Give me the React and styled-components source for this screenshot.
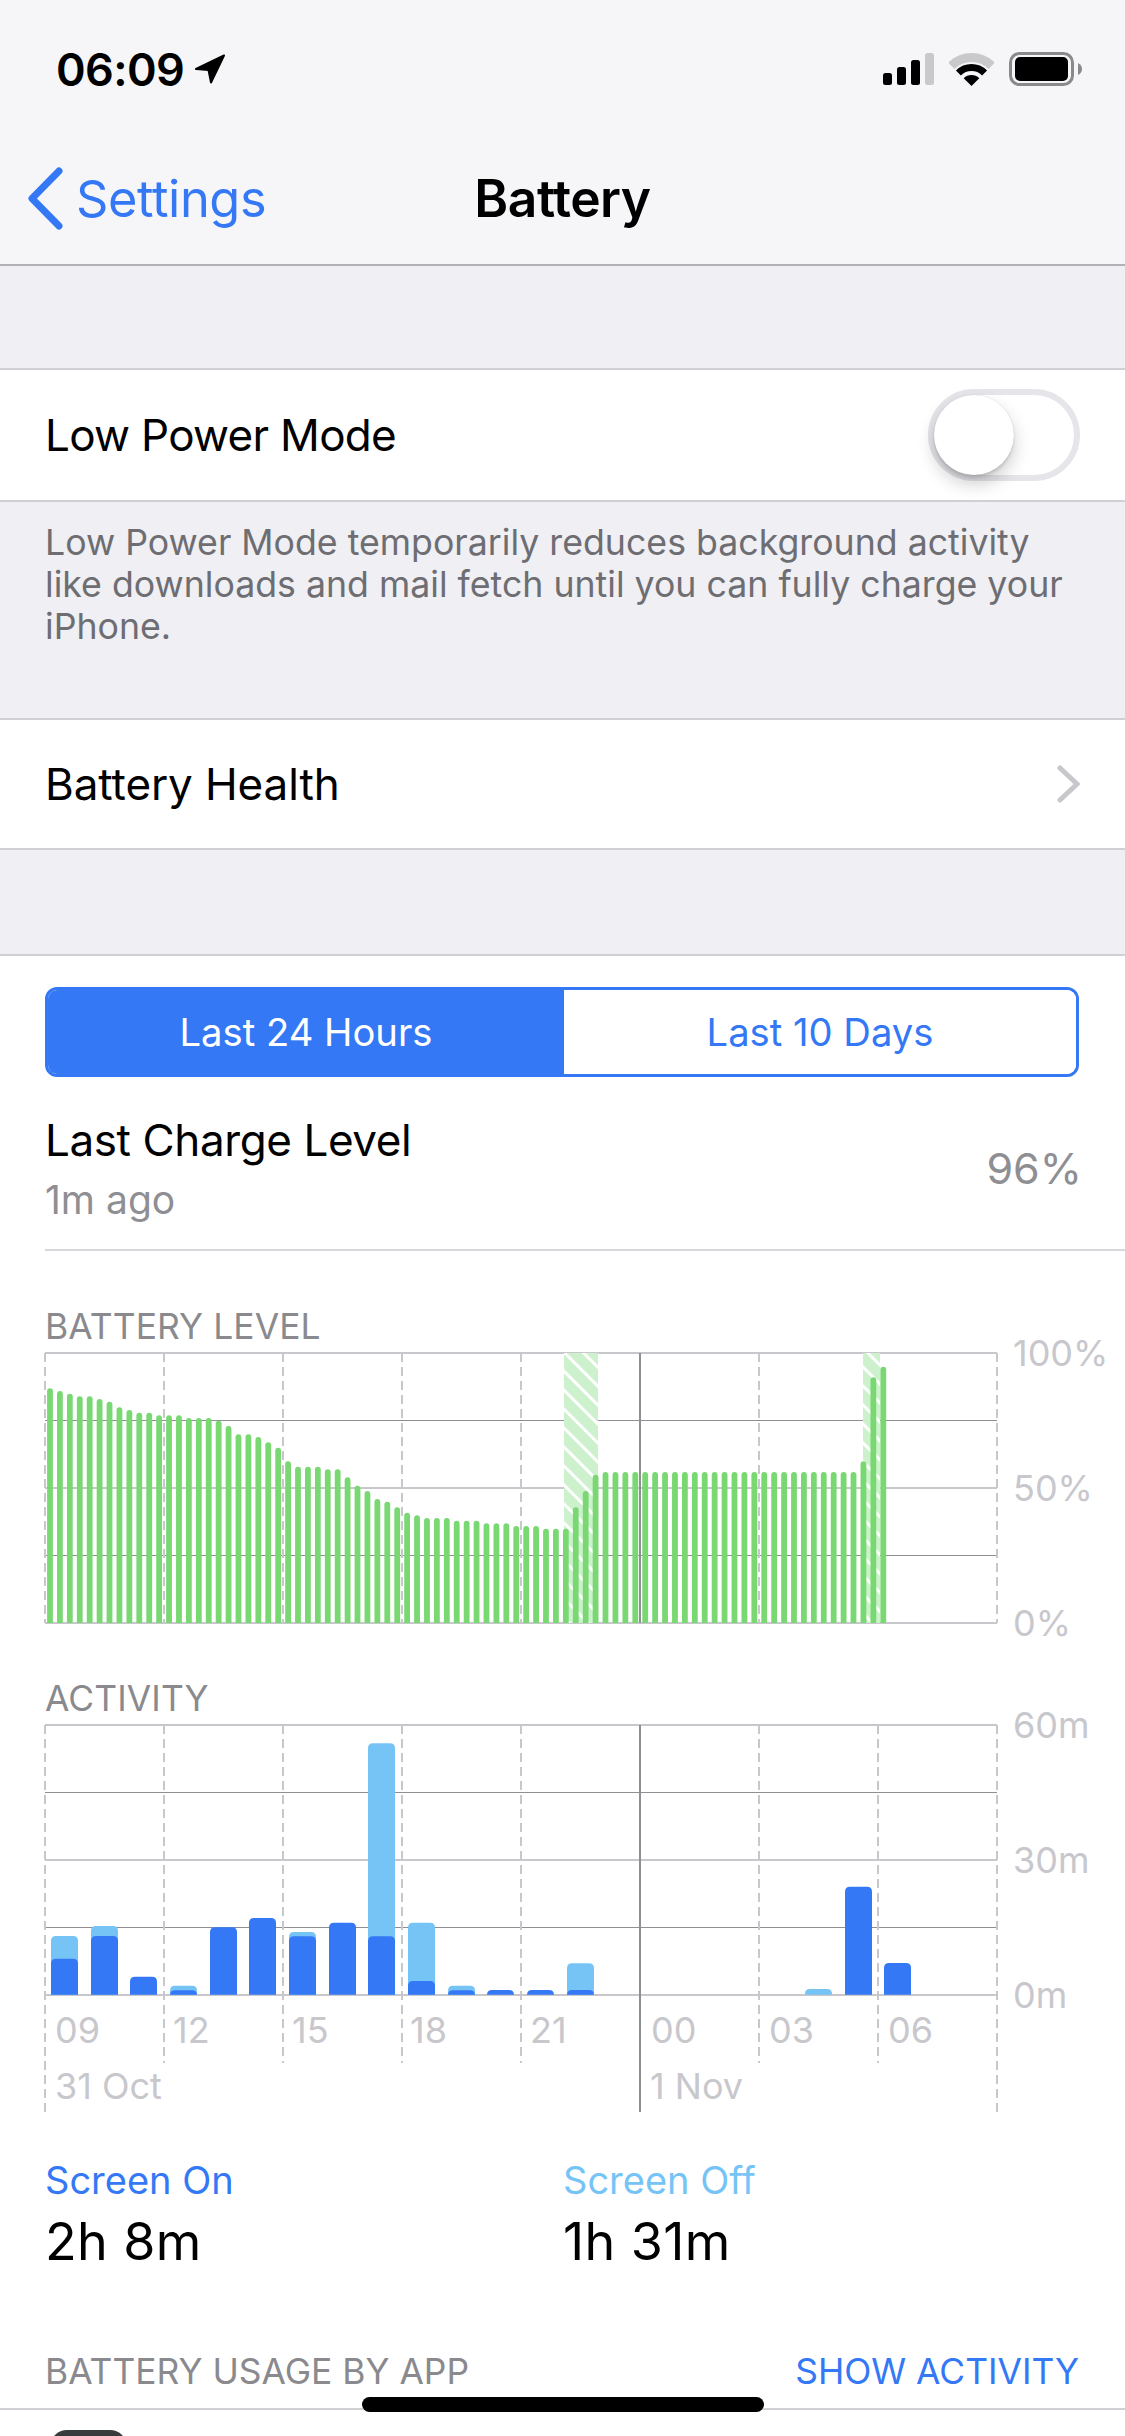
import React from 'react';
import styled, { createGlobalStyle } from 'styled-components';

const BLUE = '#3478f6';
const SKY = '#76c4f6';
const GREEN = '#79d872';
const HATCH = '#cdf1cd';
const LINE = '#c7c7cc';
const DARKLINE = '#8e8e93';

const GlobalStyle = createGlobalStyle`
  html, body {
    margin: 0;
    background: #efeff4;
    font-family: Inter, "Liberation Sans", sans-serif;
  }
`;

const Screen = styled.div`
  position: relative;
  width: 1125px;
  height: 2436px;
  overflow: hidden;
  display: flex;
  flex-direction: column;
`;

const Header = styled.header`
  height: 264px;
  flex: none;
  background: #f6f6f8;
  border-bottom: 2px solid #b2b2b4;
`;

const StatusBar = styled.div`
  height: 138px;
  box-sizing: border-box;
  padding: 0 43px 0 56px;
  display: flex;
  align-items: center;
  justify-content: space-between;
`;

const Clock = styled.div`
  display: flex;
  align-items: center;
  gap: 10px;
  font-size: 45px;
  font-weight: 600;
  letter-spacing: -0.6px;
  color: #000;
`;

const StatusIcons = styled.div`
  display: flex;
  align-items: center;
  gap: 15px;
`;

const NavBar = styled.nav`
  height: 120px;
  display: grid;
  grid-template-columns: 1fr auto 1fr;
  align-items: center;
`;

const BackLink = styled.div`
  display: flex;
  align-items: center;
  gap: 13px;
  padding-left: 27px;
  font-size: 50.5px;
  letter-spacing: -0.4px;
  color: ${BLUE};
`;

const NavTitle = styled.div`
  font-size: 51.5px;
  font-weight: 600;
  letter-spacing: -0.5px;
  color: #000;
`;

const Gap = styled.div`
  flex: none;
  height: ${(p) => p.$h}px;
`;

const Row = styled.div`
  flex: none;
  height: ${(p) => p.$h || 132}px;
  box-sizing: border-box;
  padding: 0 46px 0 45px;
  display: flex;
  align-items: center;
  justify-content: space-between;
  background: #fff;
  border-top: 2px solid #d0d0d4;
  border-bottom: 2px solid #d0d0d4;
`;

const RowLabel = styled.div`
  font-size: 44px;
  letter-spacing: ${(p) => (p.$tight ? -0.7 : -0.1)}px;
  color: #000;
`;

const Toggle = styled.div`
  position: relative;
  width: 152px;
  height: 92px;
  box-sizing: border-box;
  margin-right: -1px;
  border: 6px solid #e5e5ea;
  border-radius: 46px;
`;

const Knob = styled.div`
  position: absolute;
  left: 0;
  top: 0;
  width: 80px;
  height: 80px;
  border-radius: 50%;
  background: #fff;
  box-shadow: 0 9px 18px rgba(0, 0, 0, 0.2), 0 3px 3px rgba(0, 0, 0, 0.1), 0 0 1px rgba(0, 0, 0, 0.2);
`;

const RowChevron = styled.svg`
  margin-right: -2px;
`;

const FooterNote = styled.p`
  flex: none;
  height: 216px;
  box-sizing: border-box;
  margin: 0;
  padding: 19px 40px 0 45px;
  font-size: 35.7px;
  line-height: 42px;
  color: #6d6d72;
`;

const Panel = styled.section`
  flex: 1;
  background: #fff;
  border-top: 2px solid #d0d0d4;
  display: flex;
  flex-direction: column;
`;

const Segmented = styled.div`
  margin: 31px 46px 0 45px;
  height: 90px;
  box-sizing: border-box;
  display: grid;
  grid-template-columns: 516px 1fr;
  border: 3px solid ${BLUE};
  border-radius: 12px;
  overflow: hidden;
`;

const Segment = styled.div`
  display: flex;
  align-items: center;
  justify-content: center;
  font-size: 38.2px;
  background: ${(p) => (p.$active ? BLUE : '#fff')};
  color: ${(p) => (p.$active ? '#fff' : BLUE)};
`;

const ChargeRow = styled.div`
  margin-left: 45px;
  padding-right: 43px;
  height: 174px;
  box-sizing: border-box;
  display: flex;
  align-items: center;
  justify-content: space-between;
  border-bottom: 2px solid #d8d8dc;
`;

const ChargeText = styled.div`
  align-self: flex-start;
  padding-top: 36px;
`;

const ChargeTitle = styled.div`
  font-size: 44px;
  letter-spacing: -0.4px;
  line-height: 54px;
  color: #000;
`;

const ChargeAge = styled.div`
  font-size: 39px;
  line-height: 44px;
  color: #8e8e93;
  margin-top: 11px;
`;

const ChargeValue = styled.div`
  font-size: 43px;
  color: #8e8e93;
  margin-top: 9px;
`;

const ChartTitle = styled.div`
  margin: ${(p) => p.$top}px 0 0 45px;
  height: 29px;
  font-size: 35.4px;
  line-height: 32px;
  letter-spacing: 0.1px;
  color: #8a8a8e;
`;

const ChartSvg = styled.svg`
  display: block;
  flex: none;
  overflow: visible;
`;

const AxisText = styled.text`
  font-family: Inter, "Liberation Sans", sans-serif;
  font-size: 36px;
  fill: ${LINE};
`;

const Legend = styled.div`
  display: grid;
  grid-template-columns: 518px 1fr;
  padding-left: 45px;
  margin-top: 44px;
`;

const LegendLabel = styled.div`
  font-size: 38px;
  line-height: 48px;
  color: ${(p) => p.$color};
`;

const LegendValue = styled.div`
  font-size: 52px;
  line-height: 60px;
  margin-top: 8px;
  letter-spacing: 0.4px;
  color: #000;
`;

const UsageHeader = styled.div`
  margin-top: 76px;
  padding: 0 46px 0 45px;
  height: 46px;
  display: flex;
  align-items: center;
  justify-content: space-between;
  font-size: 35.4px;
  color: #8a8a8e;
`;

const ShowActivity = styled.span`
  color: ${BLUE};
`;

const UsageRule = styled.div`
  margin-top: 14px;
  height: 2px;
  background: #d0d0d4;
`;

const AppIcon = styled.div`
  margin: 20px 0 0 50px;
  width: 77px;
  height: 77px;
  border-radius: 17px;
  background: linear-gradient(#3a3d3d, #222);
`;

const HomeIndicator = styled.div`
  position: absolute;
  left: 362px;
  top: 2397px;
  width: 402px;
  height: 15px;
  border-radius: 8px;
  background: #000;
`;

const levelTops = [
  295, 303, 311, 319, 319, 327, 335, 352, 360, 368, 368, 376, 376, 376, 384, 384, 384, 392, 408, 433,
  433, 441, 457, 473, 514, 530, 530, 530, 538, 538, 562, 587, 603, 627, 635, 652, 668, 676, 684, 684,
  684, 692, 692, 692, 700, 700, 700, 708, 708, 708, 716, 716, 716, 652, 603, 554,
  ...Array(26).fill(546), 514, 262, 230,
];

const activity = [
  { x: 51, sky: 798, blue: 866 },
  { x: 91, sky: 768, blue: 798 },
  { x: 130, blue: 920 },
  { x: 170, sky: 947, blue: 961 },
  { x: 210, blue: 772 },
  { x: 249, blue: 744 },
  { x: 289, sky: 786, blue: 799 },
  { x: 329, blue: 758 },
  { x: 368, sky: 220, blue: 799 },
  { x: 408, sky: 758, blue: 933 },
  { x: 448, sky: 947, blue: 961 },
  { x: 487, blue: 960 },
  { x: 527, blue: 960 },
  { x: 567, sky: 880, blue: 960 },
  { x: 805, sky: 957 },
  { x: 845, blue: 650 },
  { x: 884, blue: 879 },
];

const columns = [45, 164, 283, 402, 521, 640, 759, 878, 997];

const roundTop = (x, top, w, bottom, r) =>
  `M${x} ${bottom}V${top + r}Q${x} ${top} ${x + r} ${top}H${x + w - r}Q${x + w} ${top} ${x + w} ${top + r}V${bottom}Z`;

function Grid({ top, step, dropInner, dropEdge }) {
  const bottom = top + step * 4;
  return (
    <>
      {[0, 1, 2, 3, 4].map((i) => {
        const heavy = i % 2 === 0;
        return (
          <line
            key={i}
            x1={45}
            x2={997}
            y1={top + step * i}
            y2={top + step * i}
            stroke={heavy ? LINE : DARKLINE}
            strokeWidth={heavy ? 2 : 1.2}
          />
        );
      })}
      {columns.map((x, i) => {
        const edge = i === 0 || i === 8;
        if (i === 5) {
          return <line key={x} x1={x} x2={x} y1={top} y2={bottom + dropEdge} stroke={DARKLINE} strokeWidth={2} />;
        }
        return (
          <line
            key={x}
            x1={x}
            x2={x}
            y1={top}
            y2={bottom + (edge ? dropEdge : dropInner)}
            stroke={LINE}
            strokeWidth={2}
            strokeDasharray="9 5"
          />
        );
      })}
    </>
  );
}

function BatteryChart() {
  const y = (z) => 1290 + z / 3 - 1340;
  return (
    <ChartSvg width={1125} height={300} viewBox="0 0 1125 300">
      <defs>
        <pattern id="charging" width="13.4" height="13.4" patternUnits="userSpaceOnUse" patternTransform="rotate(-45)">
          <rect width="13.4" height="13.4" fill={HATCH} />
          <rect width="3" height="13.4" fill="#fff" />
        </pattern>
      </defs>
      <Grid top={13} step={67.5} dropInner={0} dropEdge={0} />
      <rect x={564} y={13} width={34} height={270} fill="url(#charging)" />
      <rect x={863} y={13} width={17} height={270} fill="url(#charging)" />
      {levelTops.map((z, i) => (
        <path key={i} d={roundTop(47.1 + i * 9.92, y(z), 5.8, 283, 2.9)} fill={GREEN} />
      ))}
      <AxisText x={1013} y={26}>100%</AxisText>
      <AxisText x={1013} y={161}>50%</AxisText>
      <AxisText x={1013} y={296}>0%</AxisText>
    </ChartSvg>
  );
}

function ActivityChart() {
  const y = (z) => 1670 + z / 3 - 1712;
  const base = y(974);
  return (
    <ChartSvg width={1125} height={400} viewBox="0 0 1125 400">
      <Grid top={13} step={67.5} dropInner={68} dropEdge={117} />
      {activity.map((b) => (
        <g key={b.x}>
          {b.sky && <path d={roundTop(b.x, y(b.sky), 27, base, 5)} fill={SKY} />}
          {b.blue && <path d={roundTop(b.x, y(b.blue), 27, base, 5)} fill={BLUE} />}
        </g>
      ))}
      <AxisText x={1013} y={26}>60m</AxisText>
      <AxisText x={1013} y={161}>30m</AxisText>
      <AxisText x={1013} y={296}>0m</AxisText>
      {[
        ['09', 55],
        ['12', 173],
        ['15', 292],
        ['18', 410],
        ['21', 530],
        ['00', 651],
        ['03', 769],
        ['06', 888],
      ].map(([label, x]) => (
        <AxisText key={label} x={x} y={331}>{label}</AxisText>
      ))}
      <AxisText x={55} y={387}>31 Oct</AxisText>
      <AxisText x={650} y={387}>1 Nov</AxisText>
    </ChartSvg>
  );
}

export default function App() {
  return (
    <Screen>
      <GlobalStyle />
      <Header>
        <StatusBar>
          <Clock>
            06:09
            <svg width="32" height="30" viewBox="0 0 32 30">
              <path d="M30 1.5 L2 15 L14.5 16 L17 28.5 Z" fill="#000" stroke="#000" strokeWidth="2" strokeLinejoin="round" />
            </svg>
          </Clock>
          <StatusIcons>
            <svg width="51" height="32" viewBox="0 0 51 32">
              <rect x="0" y="20" width="9" height="12" rx="2.5" fill="#000" />
              <rect x="14" y="14" width="9" height="18" rx="2.5" fill="#000" />
              <rect x="28" y="7" width="9" height="25" rx="2.5" fill="#000" />
              <rect x="42" y="0" width="9" height="32" rx="2.5" fill="#c9c9cb" />
            </svg>
            <svg width="45" height="33" viewBox="0 0 45 33">
              <path d="M2.35 12.85A28.5 28.5 0 0 1 42.65 12.85" fill="none" stroke="#c9c9cb" strokeWidth="9" />
              <path d="M9.42 19.92A18.5 18.5 0 0 1 35.58 19.92" fill="none" stroke="#000" strokeWidth="7" />
              <path d="M22.5 33L14.7 25.2A11 11 0 0 1 30.3 25.2Z" fill="#000" />
            </svg>
            <svg width="73" height="34" viewBox="0 0 73 34">
              <rect x="1.5" y="1.5" width="62" height="31" rx="9" fill="none" stroke="#8a8a8c" strokeWidth="3" />
              <rect x="6" y="5" width="53" height="24" rx="5" fill="#000" />
              <path d="M69 11Q73 13 73 17Q73 21 69 23Z" fill="#8a8a8c" />
            </svg>
          </StatusIcons>
        </StatusBar>
        <NavBar>
          <BackLink>
            <svg width="36" height="63" viewBox="0 0 36 63">
              <path d="M32 4L5 31.5L32 59" fill="none" stroke={BLUE} strokeWidth="7" strokeLinecap="round" strokeLinejoin="round" />
            </svg>
            Settings
          </BackLink>
          <NavTitle>Battery</NavTitle>
        </NavBar>
      </Header>

      <Gap $h={102} />
      <Row $h={134}>
        <RowLabel $tight>Low Power Mode</RowLabel>
        <Toggle>
          <Knob />
        </Toggle>
      </Row>
      <FooterNote>
        Low Power Mode temporarily reduces background activity like downloads and mail fetch until you can fully charge your iPhone.
      </FooterNote>
      <Row>
        <RowLabel>Battery Health</RowLabel>
        <RowChevron width="24" height="38" viewBox="0 0 24 38">
          <path d="M3 3L20 19L3 35" fill="none" stroke={LINE} strokeWidth="5" strokeLinecap="round" strokeLinejoin="miter" />
        </RowChevron>
      </Row>
      <Gap $h={104} />

      <Panel>
        <Segmented>
          <Segment $active>Last 24 Hours</Segment>
          <Segment>Last 10 Days</Segment>
        </Segmented>
        <ChargeRow>
          <ChargeText>
            <ChargeTitle>Last Charge Level</ChargeTitle>
            <ChargeAge>1m ago</ChargeAge>
          </ChargeText>
          <ChargeValue>96%</ChargeValue>
        </ChargeRow>
        <ChartTitle $top={60}>BATTERY LEVEL</ChartTitle>
        <BatteryChart />
        <ChartTitle $top={43}>ACTIVITY</ChartTitle>
        <ActivityChart />
        <Legend>
          <div>
            <LegendLabel $color={BLUE}>Screen On</LegendLabel>
            <LegendValue>2h 8m</LegendValue>
          </div>
          <div>
            <LegendLabel $color={SKY}>Screen Off</LegendLabel>
            <LegendValue>1h 31m</LegendValue>
          </div>
        </Legend>
        <UsageHeader>
          <span>BATTERY USAGE BY APP</span>
          <ShowActivity>SHOW ACTIVITY</ShowActivity>
        </UsageHeader>
        <UsageRule />
        <AppIcon />
      </Panel>
      <HomeIndicator />
    </Screen>
  );
}
